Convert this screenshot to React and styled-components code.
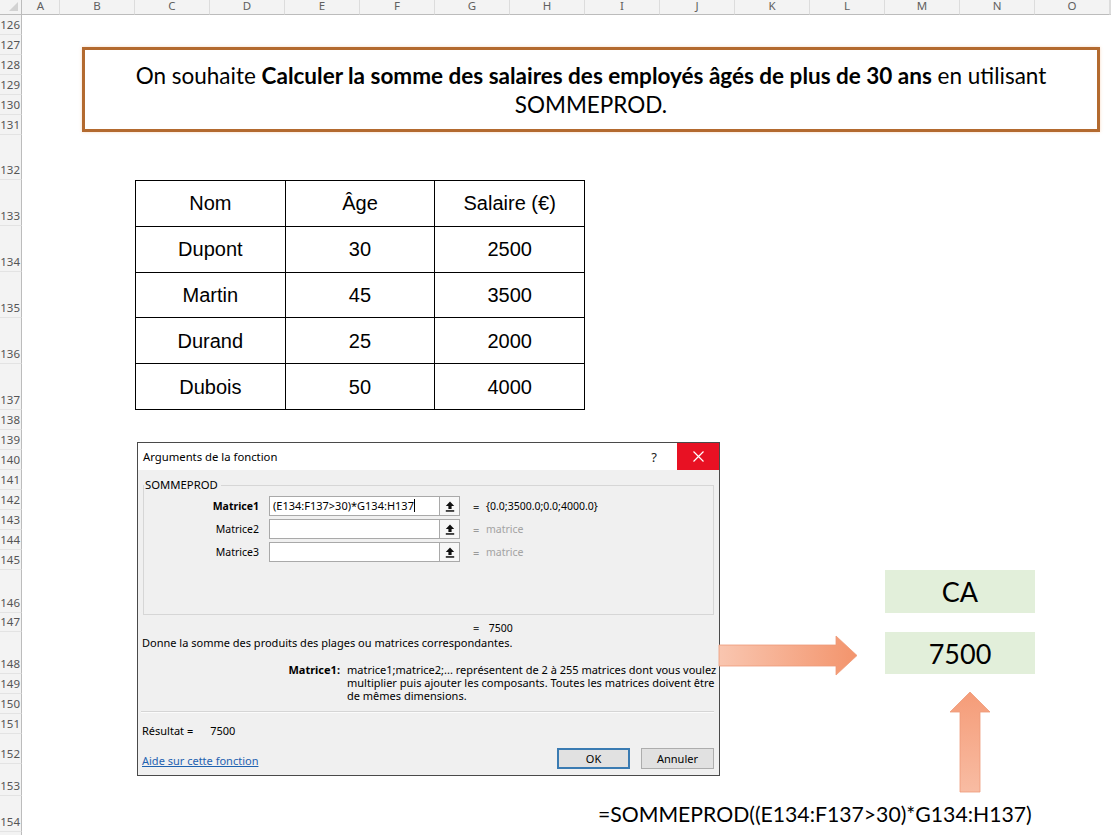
import styled, { createGlobalStyle } from "styled-components";

const GlobalStyle = createGlobalStyle`
  html, body {
    margin: 0;
    padding: 0;
    background: #fff;
    overflow: hidden;
  }
  body {
    width: 1111px;
    height: 835px;
    font-family: "Liberation Sans", Arial, sans-serif;
  }
`;

const COLUMNS = ["A", "B", "C", "D", "E", "F", "G", "H", "I", "J", "K", "L", "M", "N", "O"];

// sheet rows: [number, height in px]
const ROWS = [
  [126, 20], [127, 20], [128, 20], [129, 20], [130, 20], [131, 20],
  [132, 45], [133, 46], [134, 46], [135, 46], [136, 46], [137, 46],
  [138, 20], [139, 20], [140, 20], [141, 20], [142, 20], [143, 20],
  [144, 20], [145, 20], [146, 43], [147, 19], [148, 42], [149, 20],
  [150, 20], [151, 20], [152, 30], [153, 32], [154, 36], [155, 20],
];

const rowLine = (n) => n - 124;

const EMPLOYEES = [
  ["Nom", "Âge", "Salaire (€)"],
  ["Dupont", "30", "2500"],
  ["Martin", "45", "3500"],
  ["Durand", "25", "2000"],
  ["Dubois", "50", "4000"],
];

const Sheet = styled.div`
  position: relative;
  width: 1111px;
  height: 835px;
  overflow: hidden;
  display: grid;
  grid-template-columns: 22px 38px repeat(14, 75px) 1fr;
  grid-template-rows: 15px ${ROWS.map((r) => `${r[1]}px`).join(" ")};
`;

const Corner = styled.div`
  grid-column: 1;
  grid-row: 1;
  background: #f3f3f3;
  border-right: 1px solid #bcbcbc;
  border-bottom: 1px solid #bcbcbc;
  display: flex;
  justify-content: flex-end;
  align-items: flex-end;
  padding: 0 3px 3px 0;
`;

const ColHead = styled.div`
  grid-row: 1;
  grid-column: ${(p) => p.$col};
  background: #f3f3f3;
  border-right: 1px solid #dcdcdc;
  border-bottom: 1px solid #bcbcbc;
  color: #606060;
  font-family: "Noto Sans", sans-serif;
  font-size: 11.5px;
  line-height: 12px;
  text-align: center;
`;

const RowHead = styled.div`
  grid-column: 1;
  grid-row: ${(p) => p.$row};
  background: #f3f3f3;
  border-right: 1px solid #bcbcbc;
  border-bottom: 1px solid #e3e3e3;
  color: #555;
  font-family: "Noto Sans", sans-serif;
  font-size: 11.5px;
  line-height: 14px;
  display: flex;
  align-items: flex-end;
  justify-content: flex-end;
  padding: 0 1px 2px 0;
  overflow: hidden;
  white-space: nowrap;
`;

const Table = styled.div`
  grid-column: 4 / 10;
  grid-row: ${rowLine(133)} / ${rowLine(138)};
  display: grid;
  grid-template-columns: repeat(3, 1fr);
  grid-template-rows: repeat(5, 1fr);
  border-left: 1px solid #000;
  border-top: 1px solid #000;
`;

const TableCell = styled.div`
  border-right: 1px solid #000;
  border-bottom: 1px solid #000;
  display: flex;
  align-items: center;
  justify-content: center;
  padding-top: 1px;
  font-family: "Liberation Sans", Arial, sans-serif;
  font-size: 20px;
  color: #000;
`;

const GreenCell = styled.div`
  grid-column: 14 / 16;
  grid-row: ${(p) => p.$row};
  background: #e2efda;
  display: flex;
  align-items: center;
  justify-content: center;
  font-family: Lato, sans-serif;
  font-size: 27px;
  color: #000;
`;

const FormulaText = styled.div`
  grid-column: 10 / -1;
  grid-row: ${rowLine(154)};
  display: flex;
  align-items: center;
  padding-left: 13px;
  white-space: nowrap;
  font-family: Lato, sans-serif;
  font-size: 21.2px;
  color: #000;
`;

const NoteBox = styled.div`
  position: absolute;
  left: 82px;
  top: 47px;
  width: 1018px;
  height: 85px;
  box-sizing: border-box;
  border: 3px solid #b36a2f;
  box-shadow: 0 0 3px rgba(240, 170, 120, 0.45);
  background: #fff;
  display: flex;
  align-items: center;
  justify-content: center;
  text-align: center;
  font-family: Lato, sans-serif;
  font-size: 22.5px;
  line-height: 29px;
  color: #000;
`;

const Shape = styled.svg`
  position: absolute;
  left: ${(p) => p.$x}px;
  top: ${(p) => p.$y}px;
  overflow: visible;
`;

/* ---------- dialog ---------- */

const Dialog = styled.div`
  position: absolute;
  left: 137px;
  top: 442px;
  width: 583px;
  height: 334px;
  box-sizing: border-box;
  border: 1px solid #4a4a4a;
  background: #f0f0f0;
  display: flex;
  flex-direction: column;
  font-family: "Noto Sans", "Open Sans", sans-serif;
  font-size: 11px;
  color: #000;
`;

const TitleBar = styled.div`
  flex: none;
  height: 27px;
  background: #fff;
  display: flex;
  align-items: center;
`;

const Title = styled.div`
  flex: 1;
  padding-left: 5px;
  font-size: 11.3px;
`;

const HelpMark = styled.div`
  margin-right: 20px;
  font-size: 13px;
  color: #222;
`;

const CloseButton = styled.div`
  width: 42px;
  height: 27px;
  background: #e81123;
  display: flex;
  align-items: center;
  justify-content: center;
`;

const Body = styled.div`
  flex: 1;
  display: flex;
  flex-direction: column;
  padding: 8px 5px 6px 4px;
`;

const Group = styled.fieldset`
  margin: 0 0 0 1px;
  padding: 4px 0 52px 0;
  border: 1px solid #d6d6d6;
  min-width: 0;
`;

const Legend = styled.legend`
  padding: 0 3px 0 1px;
  font-size: 11.3px;
  line-height: 14px;
`;

const ArgList = styled.div`
  display: flex;
  flex-direction: column;
  gap: 3px;
`;

const ArgRow = styled.div`
  display: flex;
  align-items: center;
  height: 20px;
`;

const ArgLabel = styled.div`
  width: 115px;
  margin-right: 10px;
  text-align: right;
  font-size: 10.5px;
  font-weight: ${(p) => (p.$bold ? 700 : 400)};
  white-space: nowrap;
`;

const ArgInput = styled.div`
  width: 171px;
  height: 20px;
  box-sizing: border-box;
  background: #fff;
  border: 1px solid #a9a9a9;
  padding-left: 3px;
  line-height: 18px;
  white-space: nowrap;
  overflow: hidden;
`;

const Caret = styled.span`
  display: inline-block;
  width: 1px;
  height: 13px;
  background: #000;
  vertical-align: -2px;
`;

const PickButton = styled.div`
  width: 20px;
  height: 20px;
  box-sizing: border-box;
  border: 1px solid #a9a9a9;
  border-left: none;
  background: #f7f7f7;
  display: flex;
  align-items: center;
  justify-content: center;
`;

const Eq = styled.span`
  display: inline-block;
  width: 13px;
  margin-left: ${(p) => p.$offset || 0}px;
  color: ${(p) => (p.$muted ? "#9a9a9a" : "#333")};
`;

const ArgValue = styled.span`
  white-space: nowrap;
  font-size: 10.5px;
  color: ${(p) => (p.$muted ? "#a3a3a3" : "#000")};
`;

const ResultLine = styled.div`
  margin-top: 6px;
  padding-left: 331px;
  line-height: 14px;
  white-space: nowrap;
`;

const TextLine = styled.div`
  margin-top: ${(p) => p.$gap || 0}px;
  line-height: 14px;
  white-space: nowrap;
`;

const ArgHelp = styled.div`
  margin-top: 13px;
  display: grid;
  grid-template-columns: 198px 1fr;
  column-gap: 7px;
  line-height: 13px;
  white-space: nowrap;
`;

const ArgHelpName = styled.div`
  text-align: right;
  font-weight: 700;
`;

const Separator = styled.div`
  margin-top: 9px;
  margin-left: -1px;
  border-top: 1px solid #d5d5d5;
  border-bottom: 1px solid #fbfbfb;
`;

const Gap = styled.span`
  margin-left: 17px;
`;

const Footer = styled.div`
  margin-top: auto;
  display: flex;
  align-items: center;
`;

const HelpLink = styled.a`
  flex: 1;
  color: #1f62b0;
  text-decoration: underline;
  padding-top: 3px;
`;

const DialogButton = styled.div`
  width: 73px;
  height: 21px;
  box-sizing: border-box;
  margin-left: ${(p) => (p.$primary ? 0 : 11)}px;
  background: #e1e1e1;
  border: ${(p) => (p.$primary ? "2px solid #3a7bb2" : "1px solid #adadad")};
  display: flex;
  align-items: center;
  justify-content: center;
`;

function PickIcon() {
  return (
    <svg width="10" height="11" viewBox="0 0 10 11">
      <path d="M5 0.5 L9.2 5 H6.6 V8 H3.4 V5 H0.8 Z" fill="#111" />
      <rect x="0.8" y="9.2" width="8.4" height="1.5" fill="#111" />
    </svg>
  );
}

function FunctionDialog() {
  const args = [
    { name: "Matrice1", value: "(E134:F137>30)*G134:H137", result: "{0.0;3500.0;0.0;4000.0}", active: true },
    { name: "Matrice2", value: "", result: "matrice" },
    { name: "Matrice3", value: "", result: "matrice" },
  ];
  return (
    <Dialog>
      <TitleBar>
        <Title>Arguments de la fonction</Title>
        <HelpMark>?</HelpMark>
        <CloseButton>
          <svg width="11" height="11" viewBox="0 0 11 11">
            <path d="M0.5 0.5 L10.5 10.5 M10.5 0.5 L0.5 10.5" stroke="#fff" strokeWidth="1.2" />
          </svg>
        </CloseButton>
      </TitleBar>
      <Body>
        <Group>
          <Legend>SOMMEPROD</Legend>
          <ArgList>
            {args.map((a) => (
              <ArgRow key={a.name}>
                <ArgLabel $bold={a.active}>{a.name}</ArgLabel>
                <ArgInput>
                  {a.value}
                  {a.active && <Caret />}
                </ArgInput>
                <PickButton>
                  <PickIcon />
                </PickButton>
                <Eq $offset={13} $muted={!a.active}>=</Eq>
                <ArgValue $muted={!a.active}>{a.result}</ArgValue>
              </ArgRow>
            ))}
          </ArgList>
        </Group>
        <ResultLine>
          <Eq>=</Eq>
          <ArgValue>&nbsp;7500</ArgValue>
        </ResultLine>
        <TextLine $gap={1}>Donne la somme des produits des plages ou matrices correspondantes.</TextLine>
        <ArgHelp>
          <ArgHelpName>Matrice1:</ArgHelpName>
          <div>
            matrice1;matrice2;... représentent de 2 à 255 matrices dont vous voulez
            <br />
            multiplier puis ajouter les composants. Toutes les matrices doivent être
            <br />
            de mêmes dimensions.
          </div>
        </ArgHelp>
        <Separator />
        <TextLine $gap={11}>
          Résultat =<Gap>7500</Gap>
        </TextLine>
        <Footer>
          <HelpLink>Aide sur cette fonction</HelpLink>
          <DialogButton $primary>OK</DialogButton>
          <DialogButton>Annuler</DialogButton>
        </Footer>
      </Body>
    </Dialog>
  );
}

export default function App() {
  return (
    <>
      <GlobalStyle />
      <Sheet>
        <Corner>
          <svg width="9" height="9" viewBox="0 0 9 9">
            <path d="M9 0 V9 H0 Z" fill="#d2d2d2" />
          </svg>
        </Corner>
        {COLUMNS.map((c, i) => (
          <ColHead key={c} $col={i + 2}>
            {c}
          </ColHead>
        ))}
        <ColHead $col={17} />
        {ROWS.map(([n], i) => (
          <RowHead key={n} $row={i + 2}>
            {n}
          </RowHead>
        ))}

        <Table>
          {EMPLOYEES.flat().map((v, i) => (
            <TableCell key={i}>{v}</TableCell>
          ))}
        </Table>

        <GreenCell $row={rowLine(146)}>CA</GreenCell>
        <GreenCell $row={rowLine(148)}>7500</GreenCell>

        <FormulaText>=SOMMEPROD((E134:F137&gt;30)*G134:H137)</FormulaText>

        <NoteBox>
          <div>
            On souhaite <b>Calculer la somme des salaires des employés âgés de plus de 30 ans</b> en utilisant
            <br />
            SOMMEPROD.
          </div>
        </NoteBox>

        <FunctionDialog />

        <Shape $x={719} $y={635} width="139" height="41" viewBox="0 0 139 41">
          <defs>
            <linearGradient id="arrowRight" x1="0" y1="0" x2="1" y2="0">
              <stop offset="0" stopColor="#f9c6b0" />
              <stop offset="1" stopColor="#f3946c" />
            </linearGradient>
          </defs>
          <path
            d="M0 10 H117 V1 L138 20.5 L117 40 V31 H0 Z"
            fill="url(#arrowRight)"
            stroke="#ee9a78"
            strokeWidth="0.8"
          />
        </Shape>

        <Shape $x={949} $y={691} width="42" height="103" viewBox="0 0 42 103">
          <defs>
            <linearGradient id="arrowUp" x1="0" y1="0" x2="0" y2="1">
              <stop offset="0" stopColor="#f59c78" />
              <stop offset="1" stopColor="#f8bca3" />
            </linearGradient>
          </defs>
          <path
            d="M21 1 L41 21 H31 V101 H11 V21 H1 Z"
            fill="url(#arrowUp)"
            stroke="#ee9a78"
            strokeWidth="0.8"
          />
        </Shape>
      </Sheet>
    </>
  );
}
